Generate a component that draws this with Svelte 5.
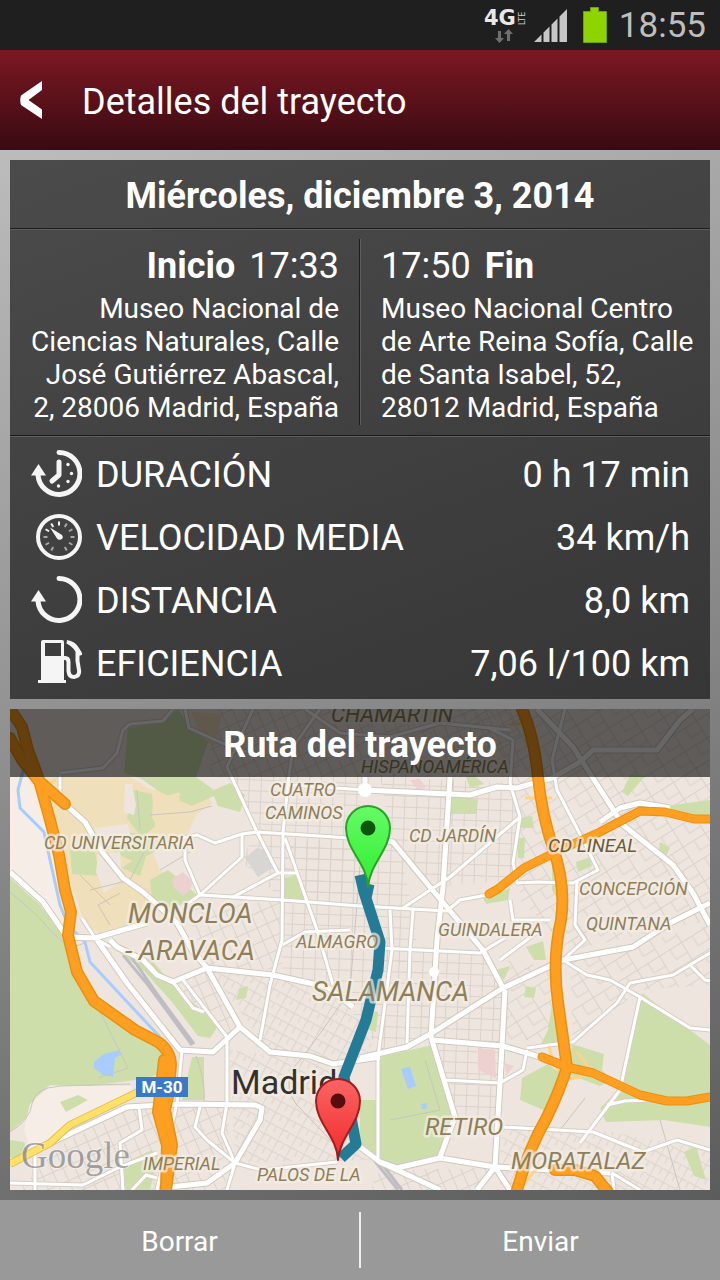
<script>
  const trip = {
    date: 'Miércoles, diciembre 3, 2014',
    start: { time: '17:33', address: 'Museo Nacional de Ciencias Naturales, Calle José Gutiérrez Abascal, 2, 28006 Madrid, España' },
    end: { time: '17:50', address: 'Museo Nacional Centro de Arte Reina Sofía, Calle de Santa Isabel, 52, 28012 Madrid, España' },
  }

  const stats = [
    { icon: 'clock', label: 'DURACIÓN', value: '0 h 17 min' },
    { icon: 'gauge', label: 'VELOCIDAD MEDIA', value: '34 km/h' },
    { icon: 'loop', label: 'DISTANCIA', value: '8,0 km' },
    { icon: 'fuel', label: 'EFICIENCIA', value: '7,06 l/100 km' },
  ]

  // gauge ticks, degrees from twelve o'clock
  const ticks = [-150, -120, -90, -60, -30, 0, 30, 60, 90, 120, 150]

  // Street grids: areas filled with rotated patterns
  const blocks = [
    { grid: 'a', d: 'M227 777 L360 777 L360 906 L283 900 L240 860 L257 832Z' },
    { grid: 'a', d: 'M380 777 L520 783 L515 880 L430 887 L393 842Z' },
    { grid: 'a', d: 'M283 840 L400 840 L432 1033 L380 1050 L333 985 L283 975Z' },
    { grid: 'a', d: 'M390 945 L485 950 L503 988 L500 1140 L460 1120 L432 1035Z' },
    { grid: 'b', d: 'M185 905 L280 902 L282 970 L207 968Z' },
    { grid: 'b', d: 'M175 983 L207 970 L240 1027 L227 1037Z' },
    { grid: 'c', d: 'M210 970 L330 987 L353 1007 L378 1057 L333 1064 L270 1052Z' },
    { grid: 'c', d: 'M230 1050 L340 1064 L378 1160 L235 1163Z' },
    { grid: 'd', d: 'M440 709 L710 709 L710 920 L570 950 L520 900 L520 783Z' },
    { grid: 'd', d: 'M570 960 L710 925 L710 985 L640 990 L573 1042Z' },
    { grid: 'c', d: 'M503 1125 L600 1130 L710 1150 L710 1190 L497 1190Z' },
    { grid: 'b', d: 'M20 1190 L60 1145 L127 1110 L230 1105 L225 1190Z' },
    { grid: 'b', d: 'M380 1170 L495 1168 L477 1190 L370 1190Z' },
    { grid: 'b', d: 'M210 709 L520 709 L520 777 L210 777Z' },
    { grid: 'd', d: 'M505 960 L556 968 L560 1040 L503 1040Z' },
  ]

  const areas = [
    { kind: 'pale', d: 'M10 745 L36 777 L50 840 L63 900 L67 937 L43 902 L10 872Z' },
    { kind: 'sand', d: 'M42 777 L130 777 L152 790 L198 780 L212 803 L196 815 L186 838 L150 845 L160 870 L196 895 L160 907 L138 925 L100 933 L85 925 L70 880 L60 840Z' },
    { kind: 'sand', d: 'M190 711 L222 714 L215 746 L203 740Z' },
    { kind: 'park', d: 'M128 728 L163 723 L178 709 L190 728 L208 742 L196 777 L214 790 L230 783 L245 795 L240 812 L218 806 L214 796 L192 806 L160 792 L140 778 L124 773Z' },
    { kind: 'park', d: 'M133 790 L152 794 L155 826 L142 838 L127 818Z' },
    { kind: 'park', d: 'M70 850 L95 852 L100 876 L72 874Z' },
    { kind: 'park', d: 'M112 830 L150 835 L158 850 L134 862 L110 850Z' },
    { kind: 'park', d: 'M150 880 L168 870 L180 880 L198 896 L170 910 L152 898Z' },
    { kind: 'park', d: 'M122 868 L148 850 L140 876Z' },
    { kind: 'light', d: 'M95 828 L128 824 L132 843 L100 846Z' },
    { kind: 'light', d: 'M125 784 L132 784 L136 805 L134 815 L124 812Z' },
    { kind: 'light', d: 'M98 855 L120 852 L122 880 L104 893 L96 872Z' },
    { kind: 'sand', d: 'M153 800 L180 792 L178 812 L160 830 L152 818Z' },
    { kind: 'pink', d: 'M172 879 L183 872 L193 882 L190 890 L183 896 L174 888Z' },
    { kind: 'grey', d: 'M245 858 L257 848 L266 850 L272 868 L258 877Z' },
    { kind: 'park', d: 'M284 878 L296 875 L304 900 L284 899Z' },
    { kind: 'park', d: 'M10 878 L40 905 L68 940 L75 970 L93 1000 L133 1030 L162 1045 L164 1068 L154 1076 L135 1080 L90 1086 L50 1085 L35 1098 L26 1118 L10 1132Z' },
    { kind: 'pale', d: 'M50 1086 L132 1086 L132 1096 L70 1124 L48 1143 L30 1150 L24 1130 L30 1104Z' },
    { kind: 'park', d: 'M60 1102 L78 1095 L88 1100 L66 1112Z' },
    { kind: 'park', d: 'M10 1140 L24 1142 L28 1156 L10 1158Z' },
    { kind: 'park', d: 'M107 943 L127 947 L143 962 L150 958 L173 985 L204 1012 L218 1026 L210 1038 L198 1036 L172 1002 L145 972Z' },
    { kind: 'park', d: 'M192 1057 L204 1057 L204 1100 L182 1100Z' },
    { kind: 'light', d: 'M210 1058 L224 1058 L222 1098 L206 1098Z' },
    { kind: 'park', d: 'M120 1165 L152 1150 L158 1156 L150 1190 L122 1190Z' },
    { kind: 'park', d: 'M380 1057 L432 1045 L455 1117 L440 1155 L397 1167 L378 1160Z' },
    { kind: 'park', d: 'M360 1100 L376 1100 L376 1156 L360 1142Z' },
    { kind: 'park', d: 'M642 993 L682 1024 L710 1045 L710 1127 L664 1120 L606 1122 L600 1108 L622 1086Z' },
    { kind: 'park', d: 'M572 1044 L604 1054 L602 1070 L612 1080 L600 1086 L568 1074Z' },
    { kind: 'park', d: 'M522 1078 L548 1064 L566 1078 L548 1112 L520 1100Z' },
    { kind: 'park', d: 'M540 1046 L548 1030 L552 1005 L560 1000 L566 1046Z' },
    { kind: 'park', d: 'M526 947 L543 941 L546 960 L534 960Z' },
    { kind: 'park', d: 'M496 970 L510 966 L504 980Z' },
    { kind: 'park', d: 'M452 793 L478 800 L476 814 L444 814Z' },
    { kind: 'park', d: 'M518 818 L532 816 L534 828 L520 828Z' },
    { kind: 'park', d: 'M517 838 L525 838 L524 858 L518 858Z' },
    { kind: 'park', d: 'M483 898 L510 888 L508 900 L486 904Z' },
    { kind: 'park', d: 'M552 865 L560 870 L558 900 L552 890Z' },
    { kind: 'park', d: 'M576 862 L590 857 L592 866 L578 872Z' },
    { kind: 'park', d: 'M630 775 L645 776 L628 796 L622 792Z' },
    { kind: 'park', d: 'M650 808 L710 800 L710 814 L690 816Z' },
    { kind: 'park', d: 'M660 842 L670 848 L664 860 L658 856Z' },
    { kind: 'park', d: 'M684 1152 L696 1146 L706 1180 L694 1176Z' },
    { kind: 'park', d: 'M466 777 L474 775 L484 784 L470 788Z' },
    { kind: 'park', d: 'M362 1010 L378 1012 L376 1032 L362 1028Z' },
    { kind: 'park', d: 'M526 986 L536 988 L534 998 L524 997Z' },
    { kind: 'park', d: 'M240 988 L248 986 L246 998 L236 1000Z' },
    { kind: 'pink', d: 'M478 1048 L495 1050 L496 1078 L478 1070Z' },
    { kind: 'pink', d: 'M505 1063 L514 1066 L506 1076Z' },
    { kind: 'pink', d: 'M410 780 L420 779 L426 788 L418 790Z' },
    { kind: 'water', d: 'M401 1069 L410 1067 L416 1086 L408 1089Z' },
    { kind: 'water', d: 'M421 1104 L427 1103 L426 1109 L422 1109Z' },
    { kind: 'water', d: 'M94 1062 L100 1057 L104 1054 L118 1050 L122 1054 L115 1058 L113 1077 L103 1075 L94 1068Z' },
  ]

  const roads = [
    'M60 773 L103 768 L117 753 L123 730 L130 724 L163 721 L173 709',
    'M60 775 L60 795',
    'M185 709 L189 728 L222 743 L246 752',
    'M305 709 L340 733 L390 737 L440 723 L510 730',
    'M253 709 L227 767 L257 832 L278 873',
    'M183 838 L197 835 L215 843 L242 834 L257 832 L350 838',
    'M242 834 L242 857 L200 895 L183 907',
    'M185 847 L185 860 L200 895 L283 900 L360 906 L447 911 L460 900 L487 895',
    'M233 897 L278 873 L297 873',
    'M320 709 L293 747 L288 783 L283 833 L282 940 L270 985 L260 1040',
    'M285 838 L317 930 L333 985',
    'M282 945 L305 932 L350 930',
    'M289 785 L365 790',
    'M82 918 L95 938 L110 947',
    'M173 982 L193 1008 L204 1012 M183 980 L227 1037 L227 1103 L222 1133 L235 1163 L227 1190',
    'M182 1050 L177 1103 L157 1190',
    'M200 1107 L195 1127 L207 1140 L235 1163 L262 1170 L337 1162',
    'M10 1183 L83 1185 L120 1167 L157 1153',
    'M35 1150 L35 1190 M139 1107 L142 1130 L120 1143 L123 1190',
    'M132 1190 L146 1175 L157 1178',
    'M403 908 L450 877 L520 817 L510 783 L513 740 L487 727',
    'M520 817 L513 863 L517 883 L537 882 L573 883 L598 870 L583 840 L557 790 L552 760 L565 709',
    'M510 900 L513 920 L550 920 M500 960 L540 930',
    'M577 880 L575 925 L585 940 L563 960',
    'M563 960 L587 975 L610 980 L640 997 L690 1028 L710 1030',
    'M710 953 L673 975 L630 983 L617 1003 L573 1042 L527 1048',
    'M360 947 L480 953 L505 938',
    'M445 1080 L500 1083 L523 1070 L527 1050',
    'M503 1127 L593 1132 L643 1152 L677 1140 L710 1150',
    'M390 910 L392 950 L378 1057 L378 1160',
    'M413 910 L410 950 L407 1043',
    'M640 997 L620 1090 L580 1143',
    'M607 1105 L625 1101 L650 1100',
    'M690 965 L705 980 L710 981',
    'M612 1173 L614 1190 M640 1190 L612 1173',
  ]

  const avenues = [
    'M68 807 L85 822 L103 853 L123 878 L143 892 L160 907 L177 923 L192 950 L207 968',
    'M10 872 L43 902 L67 937 L95 938 L147 923',
    'M97 940 L127 983 L180 1050 L213 1052 L240 1027 L270 1052 L310 1056 L333 1064 L380 1057',
    'M110 940 L117 947 L143 960 L157 975 L173 982 L207 968 L273 975 L327 987 L353 1007',
    'M207 968 L240 1027',
    'M50 1143 L127 1107 L180 1104 L255 1105 L262 1108 L260 1120 L235 1163 L207 1183 L170 1187',
    'M365 777 L365 790 L470 795 L497 787 L517 788 L552 778 L580 762 L593 750 L657 750 L680 720 L693 709',
    'M537 709 L573 747 L623 825 L673 865 L693 893 L710 925',
    'M450 777 L443 887 L437 940 L431 1037 L455 1117 L440 1157',
    'M380 840 L393 842 L430 887 L483 950 L503 988',
    'M710 903 L670 923 L633 947 L563 960 L503 988 L432 1033 L407 1047 L360 1058',
    'M432 1040 L503 1046 L540 1057',
    'M505 990 L500 1083 L495 1167 L477 1190 M495 1167 L510 1190',
    'M360 1147 L380 1162 L397 1168 L440 1158 L495 1167 L610 1173',
    'M380 1162 L440 1190',
    'M600 822 L620 808 L640 803 L670 808',
  ]

  const highways = [
    'M10 709 L22 727 L28 750 L38 777 L50 820 L59 855 L65 890 L71 912 L68 935 L77 972 L94 1001 L135 1030 L158 1042 Q170 1050 171 1064 L169 1092 L165 1110 L172 1145 L166 1190',
    'M10 738 L22 760 L38 780 L65 804',
    'M164 1060 L160 1095 L158 1112 L167 1145 L166 1190',
    'M522 709 Q534 736 538 777 Q542 815 553 848 Q566 885 561 920 Q552 960 558 1002 L567 1067 Q560 1090 547 1117 Q528 1150 517 1190',
    'M555 1170 L575 1170 L595 1176 L608 1192',
  ]

  const branches = [
    'M489 894 L498 889 L524 868 L560 850 L600 832 L640 811 L665 812 L694 819 L710 819',
    'M542 1057 L567 1067 L593 1073 L640 1095 L667 1101 L687 1101 L710 1097',
  ]

  const labels = [
    { x: 331, y: 722, size: 22, text: 'CHAMARTÍN' },
    { x: 361, y: 773, size: 18, text: 'HISPANOAMÉRICA' },
    { x: 270, y: 796, size: 18, text: 'CUATRO' },
    { x: 265, y: 819, size: 18, text: 'CAMINOS' },
    { x: 44, y: 849, size: 18, text: 'CD UNIVERSITARIA' },
    { x: 409, y: 842, size: 18, text: 'CD JARDÍN' },
    { x: 548, y: 852, size: 19, text: 'CD LINEAL', dark: true },
    { x: 579, y: 895, size: 18, text: 'CONCEPCIÓN' },
    { x: 586, y: 930, size: 18, text: 'QUINTANA' },
    { x: 438, y: 936, size: 18, text: 'GUINDALERA' },
    { x: 296, y: 948, size: 18, text: 'ALMAGRO' },
    { x: 128, y: 923, size: 27, text: 'MONCLOA' },
    { x: 125, y: 960, size: 27, text: '- ARAVACA' },
    { x: 312, y: 1001, size: 27, text: 'SALAMANCA' },
    { x: 425, y: 1135, size: 24, text: 'RETIRO' },
    { x: 511, y: 1169, size: 24, text: 'MORATALAZ' },
    { x: 143, y: 1170, size: 18, text: 'IMPERIAL' },
    { x: 257, y: 1181, size: 18, text: 'PALOS DE LA' },
  ]

  const pins = [
    { x: 368, y: 828, kind: 'green' },
    { x: 338, y: 1101, kind: 'red' },
  ]
</script>

<div class="app">
  <div class="status">
    <svg class="network" width="42" height="36" viewBox="0 0 42 36" aria-hidden="true">
      <text class="net-name" x="0" y="18">4G</text>
      <text class="net-lte" transform="translate(41 18) rotate(-90)">LTE</text>
      <path class="net-arrows" d="M14 24h3v7h3l-4.500 5l-4.500 -5h3zM23 34h3v-7h3l-4.500 -5l-4.500 5h3z" />
    </svg>
    <svg width="33" height="33" viewBox="0 0 33 33" aria-hidden="true">
      <path fill="#c6c6c6" d="M0 33L7.500 25.500V33zM9.500 33V23.500L15.500 17.500V33zM17.500 33V15.500L23.500 9.500V33zM25.500 33V7.500L33 0V33z" />
    </svg>
    <svg width="24" height="36" viewBox="0 0 24 36" aria-hidden="true">
      <path fill="#8fd400" stroke="#6ea300" d="M.5 4.500H7.500V.5H15.500V4.500H23.500V35.500H.5z" />
    </svg>
    <span class="time">18:55</span>
  </div>

  <header>
    <button class="back" aria-label="Atrás">
      <svg width="22" height="38" viewBox="0 0 22 38"><path fill="#fff" d="M22 0V9L8.500 19L22 28.500V38L1 24Q-.5 19 1 14.500z" /></svg>
    </button>
    <h1>Detalles del trayecto</h1>
  </header>

  <main>
    <section class="card">
      <h2>{trip.date}</h2>
      <div class="ends">
        <div class="end from">
          <div class="when"><b>Inicio</b><span>{trip.start.time}</span></div>
          <p>{trip.start.address}</p>
        </div>
        <div class="end to">
          <div class="when"><span>{trip.end.time}</span><b>Fin</b></div>
          <p>{trip.end.address}</p>
        </div>
      </div>
      <dl class="stats">
        {#each stats as s}
          <div class="stat">
            <svg width="52" height="52" viewBox="0 0 52 52" aria-hidden="true">
              {#if s.icon === 'gauge'}
                <circle class="line" cx="29" cy="26" r="21" stroke-width="4" />
                {#each ticks as t}
                  <path class="tick" class:lit={t <= 0 && t >= -60} d="M29 10.500V14.500" transform="rotate({t} 29 26)" />
                {/each}
                <path class="solid" d="M20 16.500L32 24Q34 27 31 28.500Q28.500 29.500 27 27.500z" />
              {:else if s.icon === 'fuel'}
                <path class="solid" fill-rule="evenodd" d="M13 3H32Q34 3 34 5V43H36V46H8V43H11V5Q11 3 13 3zM15 6V19H31V6z" />
                <path class="line" stroke-width="4" d="M33 21H35Q38.500 21 38.500 25V34Q39 40 44 40Q50 39 49 33L47.500 24V16" />
                <path class="solid" d="M37 3Q45 4 49 11L52 16V18L48 19L45 14Q42 9 36.500 6.500z" />
              {:else}
                <path class="line" stroke-width="5" d="M29 4.500A21 21 0 1 1 8 27" />
                <path class="solid" d="M8.500 16L16 27.500H1z" />
                {#if s.icon === 'clock'}
                  <path class="line" stroke-width="5" d="M29 14V27L22 33" />
                  <circle class="solid" cx="38" cy="16.500" r="1.700" />
                  <circle class="solid" cx="41.500" cy="25.500" r="1.700" />
                  <circle class="solid" cx="38" cy="33.500" r="1.700" />
                  <circle class="solid" cx="28.500" cy="38" r="1.700" />
                {/if}
              {/if}
            </svg>
            <dt>{s.label}</dt>
            <dd>{s.value}</dd>
          </div>
        {/each}
      </dl>
    </section>

    <section class="route">
      <svg class="map" viewBox="10 709 700 481" role="img" aria-label="Mapa de Madrid">
        <defs>
          <pattern id="grid-a" width="12" height="11" patternUnits="userSpaceOnUse" patternTransform="rotate(2)"><path class="street" d="M0 .5H12M.5 0V11" /></pattern>
          <pattern id="grid-b" width="11" height="14" patternUnits="userSpaceOnUse" patternTransform="rotate(-24)"><path class="street" d="M0 .5H11M.5 0V14" /></pattern>
          <pattern id="grid-c" width="15" height="12" patternUnits="userSpaceOnUse" patternTransform="rotate(28)"><path class="street" d="M0 1L8 0L15 1M1 0L0 12M8 0V7" /></pattern>
          <pattern id="grid-d" width="26" height="20" patternUnits="userSpaceOnUse" patternTransform="rotate(-32)"><path class="street" d="M0 .5H26M.5 0V20M13 0V12H26" /></pattern>
          <linearGradient id="pin-green" x2="0" y2="1"><stop offset="0" stop-color="#66fb66" /><stop offset="1" stop-color="#2fee2f" /></linearGradient>
          <linearGradient id="pin-red" x2="0" y2="1"><stop offset="0" stop-color="#fb6464" /><stop offset="1" stop-color="#f02a2a" /></linearGradient>
        </defs>

        <rect x="10" y="709" width="700" height="481" fill="#eee6de" />
        {#each blocks as b}<path d={b.d} fill="url(#grid-{b.grid})" />{/each}
        {#each areas as a}<path class="area {a.kind}" d={a.d} />{/each}

        <path class="trail" d="M10 892Q35 912 52 932T85 943M10 1132Q30 1120 32 1104T60 1086L130 1084M196 1056Q206 1080 204 1104M100 1012L128 1068L98 1078M360 866L350 990Q320 1035 300 1060Q280 1080 296 1104L340 1150" />
        <path class="trail" d="M137 790L140 830M150 815L190 812L212 806M160 870L190 852M90 890L130 880L145 850M110 925L98 905L120 893M80 875L110 905M425 1060L440 1110L390 1120M660 1120L680 1190M585 1098L560 1130" />
        <path class="river" d="M24 730L26 760L18 790L20 808L44 832L50 860L60 905L68 925L85 942L90 962L130 1005L160 1037" />
        <path class="rail" d="M123 955L148 985L192 1045M130 955L160 998L194 1044M374 1160L398 1190M382 1164L402 1190" />

        {#each roads as d}<path class="road casing" {d} />{/each}
        {#each avenues as d}<path class="avenue casing" {d} />{/each}
        {#each roads as d}<path class="road" {d} />{/each}
        {#each avenues as d}<path class="avenue" {d} />{/each}
        <circle cx="365" cy="790" r="7" fill="#fff" />
        <circle cx="434" cy="972" r="5" fill="#fff" />

        <path class="yellow edge" d="M10 1164L50 1143L70 1125L140 1091" />
        <path class="yellow" d="M10 1164L50 1143L70 1125L140 1091" />
        <path class="ramp" d="M525 798H552M549 1046Q556 1078 572 1078T588 1066L577 1052M548 852L568 842M540 1165L520 1188M156 1078L168 1068M510 725L530 722M56 780L42 788" />
        {#each highways as d}<path class="highway edge" {d} />{/each}
        {#each branches as d}<path class="branch edge" {d} />{/each}
        {#each highways as d}<path class="highway" {d} />{/each}
        {#each branches as d}<path class="branch" {d} />{/each}

        <path class="trip" d="M360 875L364 892L380 942L378 970L366 1020L344 1077L350 1112L356 1144L341 1158M369 884L366 898" />

        {#each labels as l}
          <text class="place" class:dark={l.dark} x={l.x} y={l.y} font-size={l.size}>{l.text}</text>
        {/each}
        <text class="city" x="231" y="1094">Madrid</text>
        <rect x="136" y="1077" width="52" height="20" fill="#3a78c8" />
        <text class="shield" x="162" y="1093">M-30</text>
        <text class="brand" x="21" y="1168">Google</text>

        {#each pins as p}
          <g class="pin {p.kind}" transform="translate({p.x} {p.y})">
            <path class="body" d="M0 59C-1 35 -22 22 -22 0A22 22 0 1 1 22 0C22 22 2 35 0 59z" fill="url(#pin-{p.kind})" />
            <circle class="eye" r="7.500" />
          </g>
        {/each}
      </svg>
      <h2>Ruta del trayecto</h2>
    </section>
  </main>

  <footer>
    <button>Borrar</button>
    <button>Enviar</button>
  </footer>
</div>

<style>
  :global(body) { margin: 0; background: #9a9a9a; }
  .app { min-height: 100vh; display: flex; flex-direction: column; font-family: Roboto, sans-serif; color: #fff; }
  h1, h2, p, dl, dd { margin: 0; }
  button { border: none; background: none; color: inherit; font-family: inherit; cursor: pointer; }

  .status { height: 50px; box-sizing: border-box; padding: 0 14px; background: #1f1f1f; display: flex; align-items: center; justify-content: flex-end; }
  .status svg { margin-right: 8px; }
  .status svg + svg { margin-right: 16px; }
  .status svg + svg + svg { margin-right: 12px; }
  .time { font-size: 35px; color: #bebebe; }
  .net-name { font: bold 21px "DejaVu Sans", sans-serif; fill: #e8e8e8; }
  .net-lte { font: 8px "DejaVu Sans", sans-serif; fill: #d0d0d0; }
  .net-arrows { fill: #707070; }

  header { height: 100px; box-sizing: border-box; padding: 4px 20px 0; display: flex; align-items: center; background: linear-gradient(#7b1822, #390a12); }
  .back { width: 62px; padding: 0 0 4px; text-align: left; line-height: 0; }
  h1 { font-size: 36px; font-weight: 400; }

  main { flex: 1; padding: 10px; display: flex; flex-direction: column; gap: 10px; background: linear-gradient(160deg, #bcbcbc, #5c5c5c); }
  h2 { padding-top: 4px; font-size: 36px; font-weight: 700; line-height: 64px; text-align: center; }

  .card { background: linear-gradient(160deg, #4b4b4b, #363636); }
  .ends { display: grid; grid-template-columns: 1fr 1fr; padding: 10px 0; border-top: 1px solid #1c1c1c; border-bottom: 1px solid #1c1c1c; box-shadow: inset 0 1px #5e5e5e, 0 1px #5e5e5e; }
  .end { box-sizing: border-box; height: 186px; padding: 5px 10px 0 20px; }
  .from { padding: 5px 20px 0 10px; text-align: right; border-right: 1px solid #1c1c1c; }
  .to { border-left: 1px solid #5e5e5e; }
  .when { display: flex; gap: 14px; font-size: 36px; line-height: 44px; }
  .from .when { justify-content: flex-end; }
  .end p { margin-top: 4px; font-size: 28px; line-height: 33px; }

  .stats { padding: 6px 20px 5px; }
  .stat { display: flex; align-items: center; height: 63px; font-size: 36px; }
  .stat dt { margin-left: 14px; padding-top: 2px; }
  .stat dd { margin-left: auto; padding-top: 2px; }
  .line { fill: none; stroke: #f5f5f5; stroke-linecap: round; stroke-linejoin: round; }
  .solid { fill: #f5f5f5; }
  .tick { stroke: #a8a8a8; stroke-width: 2; }
  .tick.lit { stroke: #f5f5f5; }

  .route { display: grid; }
  .route > * { grid-area: 1 / 1; }
  .route h2 { align-self: start; background: rgba(0, 0, 0, .6); }
  .map { display: block; width: 100%; height: auto; }

  .map path { stroke-linejoin: round; }
  .street { fill: none; stroke: #d9d3cc; stroke-width: 1; }
  .pale { fill: #f6eee6; }
  .light { fill: #eee6de; }
  .sand { fill: #f0dfbb; }
  .park { fill: #cddeab; }
  .pink { fill: #edd0d0; }
  .grey { fill: #d8d6d2; }
  .water { fill: #a9ccff; }
  .trail { fill: none; stroke: #c9c5c0; stroke-width: 1; }
  .river { fill: none; stroke: #a9ccff; stroke-width: 3; }
  .rail { fill: none; stroke: #bfbdc2; stroke-width: 3; }
  .road { fill: none; stroke: #fff; stroke-width: 3; }
  .road.casing { stroke: #d6cec6; stroke-width: 5; }
  .avenue { fill: none; stroke: #fff; stroke-width: 5; }
  .avenue.casing { stroke: #d0c8bf; stroke-width: 7; }
  .yellow { fill: none; stroke: #ffe168; stroke-width: 6; }
  .yellow.edge { stroke: #e2bd50; stroke-width: 8; }
  .ramp { fill: none; stroke: #fdd486; stroke-width: 3; }
  .highway, .branch { fill: none; stroke: #ff9f22; stroke-width: 9; stroke-linecap: round; }
  .highway.edge { stroke: #e8900f; stroke-width: 12; }
  .branch { stroke-width: 7; }
  .branch.edge { stroke: #e8900f; stroke-width: 9; }
  .trip { fill: none; stroke: #237b96; stroke-width: 11; }

  .place { font-style: italic; fill: #8f7f58; stroke: rgba(244, 238, 230, .7); stroke-width: 5; stroke-linejoin: round; paint-order: stroke; }
  .place.dark { fill: #6b5b35; }
  .city { font-size: 34px; fill: #35302a; stroke: rgba(244, 238, 230, .7); stroke-width: 5; paint-order: stroke; }
  .shield { font-size: 17px; font-weight: 700; fill: #fff; text-anchor: middle; }
  .brand { font: 37px "Liberation Serif", serif; fill: rgba(110, 110, 110, .6); stroke: rgba(255, 255, 255, .4); stroke-width: 2; paint-order: stroke; }
  .body { stroke-width: 2; }
  .green .body { stroke: #2aa02a; }
  .green .eye { fill: #0d560d; }
  .red .body { stroke: #a11d1d; }
  .red .eye { fill: #560d0d; }

  footer { display: grid; grid-template-columns: 1fr 1fr; padding: 12px 0; background: #999; }
  footer button { height: 56px; padding: 2px 0 0; font-size: 28px; border-right: 1px solid #f0f0f0; }
  footer button + button { border-right: none; border-left: 1px solid #f0f0f0; }
</style>
